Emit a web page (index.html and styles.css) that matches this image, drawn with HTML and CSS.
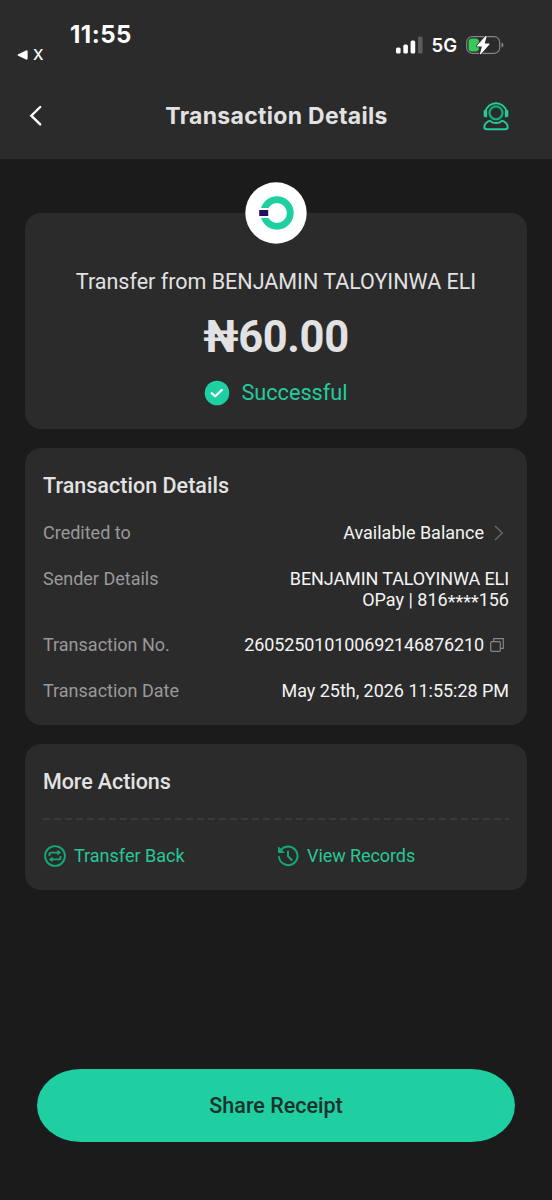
FILE: index.html
```html
<!DOCTYPE html>
<html lang="en">
<head>
<meta charset="utf-8">
<title>Transaction Details</title>
<link rel="stylesheet" href="styles.css">
</head>
<body>
<header class="header">
  <div class="status">
    <div class="status-left">
      <div class="time">11:55</div>
      <div class="return"><svg width="11" height="10" viewBox="0 0 11 10"><path d="M1.2 4.300 9 .4Q10.600-.2 10.600 1.400V8.600Q10.600 10.200 9 9.600L1.200 5.700Q-.1 5 1.200 4.300Z" fill="#fff"/></svg><span class="return-app">X</span></div>
    </div>
    <div class="status-right">
      <svg class="signal" width="28" height="18" viewBox="0 0 28 18"><g fill="#fff"><rect x="0" y="11.500" width="4.600" height="6" rx="1.500"/><rect x="7.300" y="8.500" width="4.600" height="9" rx="1.500"/><rect x="14.600" y="4.500" width="4.600" height="13" rx="1.500"/></g><rect x="22" y=".5" width="4.600" height="17" rx="1.500" fill="#5c5c5c"/></svg>
      <span class="network">5G</span>
      <svg class="battery" width="38" height="20" viewBox="0 0 38 20"><rect x=".7" y="1.700" width="33" height="16.600" rx="5.500" fill="none" stroke="#858585" stroke-width="1.200"/><path d="M35.500 7.500Q37.500 8 37.500 10T35.500 12.500Z" fill="#858585"/><rect x="2.500" y="3.500" width="10.500" height="13" rx="3.500" fill="#35cb5b"/><path d="M19.600 1 10.800 10.700Q10.300 11.500 11.200 11.500H15.900L14 18.500Q14 19.700 15 18.900L23.400 9.600Q23.900 8.600 23 8.600H18.600L20.600 2Q20.700.2 19.600 1Z" fill="#fff" stroke="#2b2b2b" stroke-width="1.400" paint-order="stroke"/></svg>
    </div>
  </div>
  <div class="nav">
    <svg class="back" width="14" height="22" viewBox="0 0 14 22"><path d="M12.200 2 3.300 10.700 12.200 19.400" fill="none" stroke="#fff" stroke-width="2.400" stroke-linecap="round"/></svg>
    <h1 class="title">Transaction Details</h1>
    <svg class="support" width="28" height="32" viewBox="0 0 28 32" fill="none" stroke="#23cc9b" stroke-width="1.900" stroke-linecap="round" stroke-linejoin="round"><circle cx="14" cy="12.800" r="6.500" stroke="#16ad7e" stroke-width="2.200"/><path d="M3.500 11.500A10.800 10.800 0 0 1 24.500 11.500"/><path d="M2.600 11V16M4.200 10.500V16.500M25.400 11V16M23.800 10.500V16.500"/><path d="M7.800 20.700Q14 25.500 20.200 20.700Q25.400 22.600 25.700 27.200Q25.700 29.300 23.200 29.300H4.800Q2.300 29.300 2.300 27.200Q2.600 22.600 7.800 20.700Z"/></svg>
  </div>
</header>
<main class="content">
  <section class="card summary">
    <div class="logo"><svg width="62" height="62" viewBox="0 0 62 62"><circle cx="31" cy="31" r="30.700" fill="#fff"/><circle cx="32" cy="31" r="13.300" fill="none" stroke="#1ecfa0" stroke-width="6.800"/><rect x="12" y="26" width="11.500" height="10" fill="#fff"/><rect x="14.200" y="28" width="9" height="6" fill="#210f60"/></svg></div>
    <p class="from">Transfer from BENJAMIN TALOYINWA ELI</p>
    <p class="amount">₦60.00</p>
    <p class="state"><svg width="26" height="26" viewBox="0 0 26 26"><circle cx="13" cy="13" r="12.300" fill="#1dcfa1"/><path d="M7.800 13.200 11.200 16.200 17.900 9.900" fill="none" stroke="#fff" stroke-width="2.200" stroke-linecap="round" stroke-linejoin="round"/></svg><span class="state-text">Successful</span></p>
  </section>
  <section class="card details">
    <h2 class="heading">Transaction Details</h2>
    <div class="row"><span class="label">Credited to</span><span class="value">Available Balance</span><svg class="chevron" width="10" height="18" viewBox="0 0 10 18"><path d="M1 2 8.200 9 1 16" fill="none" stroke="#676767" stroke-width="1.500"/></svg></div>
    <div class="row sender"><span class="label">Sender Details</span><span class="value"><span class="sender-name">BENJAMIN TALOYINWA ELI</span><br>OPay | 816<span class="mask">****</span>156</span></div>
    <div class="row"><span class="label">Transaction No.</span><span class="value number">260525010100692146876210</span><svg class="copy" width="14" height="14" viewBox="0 0 14 14" fill="none" stroke="#858585" stroke-width="1.200"><rect x=".7" y="3.700" width="9.600" height="9.600" rx="1"/><path d="M3.700 3.500V.7H13.300V10.300H10.500"/></svg></div>
    <div class="row"><span class="label">Transaction Date</span><span class="value date">May 25th, 2026 11:55:28 PM</span></div>
  </section>
  <section class="card more">
    <h2 class="heading more-heading">More Actions</h2>
    <svg class="divider" width="466" height="2" viewBox="0 0 466 2"><path d="M0 1H466" stroke="#404040" stroke-width="1.300" stroke-dasharray="7 4"/></svg>
    <div class="actions">
      <a class="action"><svg width="22" height="22" viewBox="0 0 22 22" fill="none" stroke="#16a777" stroke-width="1.900" stroke-linecap="round" stroke-linejoin="round"><circle cx="11" cy="11" r="9.900"/><path d="M5.500 10.300V9.300Q5.500 7.600 7.200 7.600H15"/><path d="M16.500 11.700V12.700Q16.500 14.400 14.800 14.400H7"/><path d="M14 5.700 16.600 7.600 14 9.500ZM8 12.500 5.400 14.400 8 16.300Z" fill="#16a777" stroke-width=".8"/></svg><span class="back-text">Transfer Back</span></a>
      <a class="action"><svg width="22" height="22" viewBox="0 0 22 22" fill="none" stroke="#16a777" stroke-width="2" stroke-linecap="round" stroke-linejoin="round"><path d="M3.300 6A9.300 9.300 0 1 1 2 12"/><path d="M1.500 2.300V7.500H6.700Z" fill="#16a777" stroke-width="1"/><path d="M11 6.500V11.300L14.700 15"/></svg><span class="records-text">View Records</span></a>
    </div>
  </section>
</main>
<footer class="footer"><button class="share">Share Receipt</button></footer>
</body>
</html>
```
FILE: styles.css
```css
* { box-sizing: border-box; }
body { margin: 0; width: 552px; height: 1200px; display: flex; flex-direction: column; background: #1b1b1b; color: #e2e2e2; font-family: Roboto, sans-serif; overflow: hidden; }
h1, h2, p { margin: 0; font-weight: 500; }
svg { display: block; flex: none; }
.header { height: 159px; flex: none; background: #2b2b2b; font-family: Inter, sans-serif; color: #fff; }
.status { height: 80px; display: flex; justify-content: space-between; padding: 20px 48px 0 17px; }
.time { padding-left: 53px; font-size: 24px; line-height: 30px; font-weight: 700; letter-spacing: 0.5px; }
.return { display: flex; align-items: center; gap: 5px; height: 10px; font-size: 15px; line-height: 10px; font-weight: 500; }
.status-right { display: flex; align-items: center; height: 50px; }
.network { margin: 0 9px 0 8px; font-size: 18.5px; font-weight: 600; }
.nav { height: 72px; display: grid; grid-template-columns: 60px 1fr 60px; align-items: center; padding: 0 12px 0 13px; }
.back { margin-left: 15px; }
.title { text-align: center; font-size: 23px; line-height: 30px; font-weight: 700; letter-spacing: 0.3px; color: #e2e2e2; white-space: nowrap; }
.support { margin: -1px 0 0 2px; }
.content { padding: 54px 25px 0; display: flex; flex-direction: column; gap: 19px; }
.card { background: #2b2b2b; border-radius: 16px; padding: 0 18px; }
.summary { height: 216px; display: flex; flex-direction: column; align-items: center; }
.logo { height: 62px; margin-top: -31px; }
.from { margin-top: 25px; font-size: 21.5px; line-height: 26px; font-weight: 400; white-space: nowrap; }
.amount { margin-top: 17px; font-size: 43.5px; line-height: 52px; font-weight: 700; letter-spacing: -0.4px; }
.state { display: flex; align-items: center; gap: 11px; margin-top: 16px; color: #25cb9c; font-size: 21.7px; line-height: 26px; font-weight: 400; }
.details { height: 277px; }
.heading { padding-top: 25px; font-size: 21.5px; line-height: 26px; letter-spacing: 0.03px; }
.more-heading { letter-spacing: -0.08px; }
.row { display: flex; align-items: flex-start; height: 22px; margin-top: 24px; font-size: 18px; line-height: 21px; white-space: nowrap; }
.details .heading + .row { margin-top: 23px; }
.sender { height: 42px; }
.label { color: #999; }
.value { margin-left: auto; color: #f4f4f4; text-align: right; }
.sender-name { letter-spacing: -0.1px; }
.mask { display: inline-block; line-height: 16px; transform: translateY(2px); }
.number { letter-spacing: -0.13px; }
.date { letter-spacing: -0.03px; }
.chevron { margin: 2px 5px 0 10px; }
.copy { margin: 4px 5px 0 6px; }
.more { height: 145.5px; }
.divider { margin-top: 23px; }
.actions { display: grid; grid-template-columns: 233px 233px; margin-top: 25px; font-size: 18px; line-height: 21px; color: #27c798; }
.action { display: flex; gap: 8px; padding-left: 1px; }
.records-text { letter-spacing: -0.08px; }
.footer { margin: auto 37px 58px; }
.share { display: block; width: 478px; height: 73.5px; border: 0; border-radius: 44px / 37px; background: #1fcfa1; color: #1c312c; font: 500 21.5px Roboto, sans-serif; }
```
